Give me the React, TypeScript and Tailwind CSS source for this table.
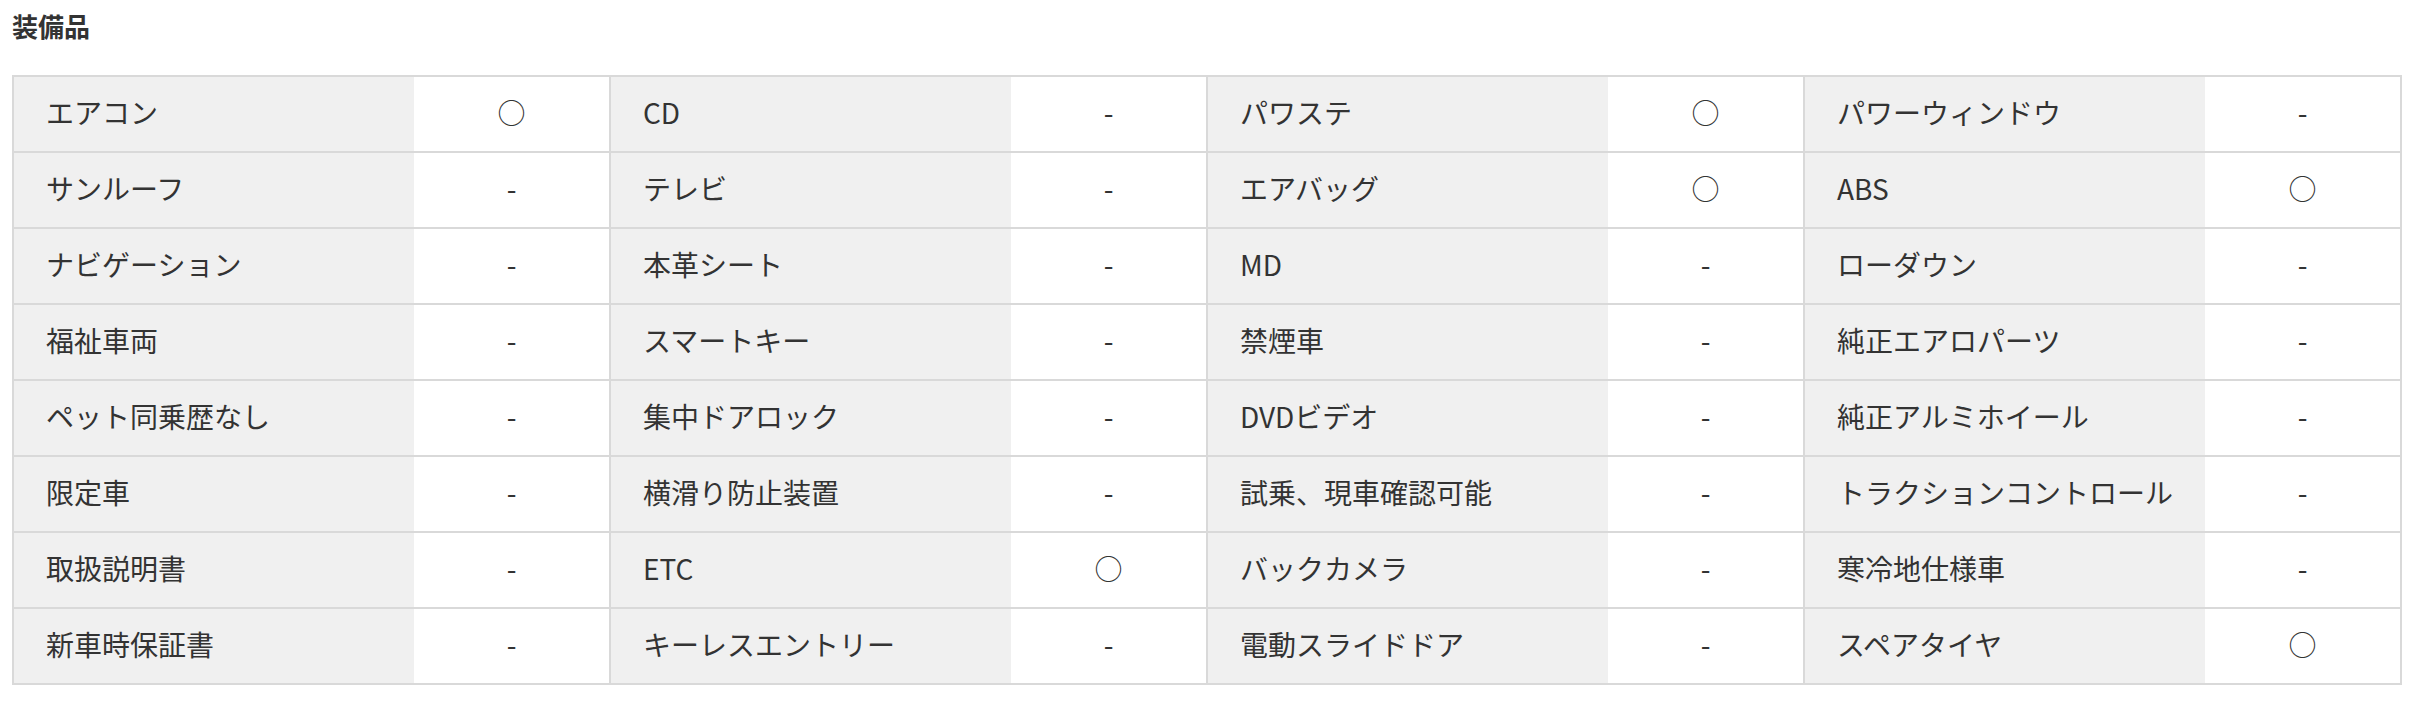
const rows: [string, string][][] = [
  [['エアコン', '○'], ['CD', '-'], ['パワステ', '○'], ['パワーウィンドウ', '-']],
  [['サンルーフ', '-'], ['テレビ', '-'], ['エアバッグ', '○'], ['ABS', '○']],
  [['ナビゲーション', '-'], ['本革シート', '-'], ['MD', '-'], ['ローダウン', '-']],
  [['福祉車両', '-'], ['スマートキー', '-'], ['禁煙車', '-'], ['純正エアロパーツ', '-']],
  [['ペット同乗歴なし', '-'], ['集中ドアロック', '-'], ['DVDビデオ', '-'], ['純正アルミホイール', '-']],
  [['限定車', '-'], ['横滑り防止装置', '-'], ['試乗、現車確認可能', '-'], ['トラクションコントロール', '-']],
  [['取扱説明書', '-'], ['ETC', '○'], ['バックカメラ', '-'], ['寒冷地仕様車', '-']],
  [['新車時保証書', '-'], ['キーレスエントリー', '-'], ['電動スライドドア', '-'], ['スペアタイヤ', '○']],
]

export default function App() {
  return (
    <div className="h-[704px] w-[2416px] bg-white font-['Noto_Sans_CJK_JP',sans-serif] text-[#333]">
      <h2 className="pl-[12px] pt-[8px] text-[26px] font-bold leading-[36px]">装備品</h2>
      <div className="ml-[12px] mt-[31px] w-[2390px] border-2 border-[#d9d9d9]">
        {rows.map((row, i) => (
          <div
            key={i}
            className={`flex ${i === 0 ? 'h-[74px]' : 'h-[76px] border-t-2 border-[#d9d9d9]'}`}
          >
            {row.map(([label, value], j) => (
              <div
                key={label}
                className={`flex ${j === 0 ? '' : 'border-l-2 border-[#d9d9d9]'}`}
              >
                <div className="flex w-[400px] items-center bg-[#f0f0f0] pb-[4px] pl-[32px] text-[28px]">
                  {label}
                </div>
                <div className="flex w-[195px] items-center justify-center pb-[4px] text-[28px]">
                  {value}
                </div>
              </div>
            ))}
          </div>
        ))}
      </div>
    </div>
  )
}
